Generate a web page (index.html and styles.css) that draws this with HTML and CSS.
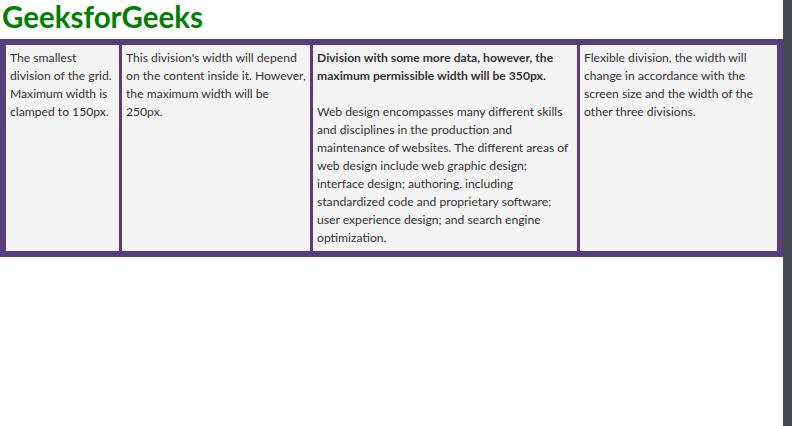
FILE: index.html
```html
<!DOCTYPE html>
<html>
<head>
<meta charset="utf-8">
<link rel="stylesheet" href="styles.css">
</head>
<body>
<div class="page">
  <h1 class="title">GeeksforGeeks</h1>
  <div class="grid">
    <div class="cell">The smallest division of the grid. Maximum width is clamped to 150px.</div>
    <div class="cell">This division's width will depend on the content inside it. However, the maximum width will be 250px.</div>
    <div class="cell">
      <p class="lead">Division with some more data, however, the maximum permissible width will be 350px.</p>
      <p class="body">Web design encompasses many different skills and disciplines in the production and maintenance of websites. The different areas of web design include web graphic design; interface design; authoring, including standardized code and proprietary software; user experience design; and search engine optimization.</p>
    </div>
    <div class="cell">Flexible division, the width will change in accordance with the screen size and the width of the other three divisions.</div>
  </div>
</div>
<div class="scrollbar"></div>
</body>
</html>
```

FILE: styles.css
```css
body {
  margin: 0;
  display: flex;
  min-height: 100vh;
  font-family: "Segoe UI", Lato, "Open Sans", sans-serif;
  background: #ffffff;
}
.page {
  flex: 1;
  min-width: 0;
}
.scrollbar {
  width: 9px;
  flex: none;
  background: #474955;
}
.title {
  margin: 0;
  height: 39px;
  padding-left: 2px;
  font-size: 29.5px;
  line-height: 34px;
  font-weight: 700;
  color: #008000;
}
.grid {
  display: grid;
  grid-template-columns: 113px 188px 264px 1fr;
  gap: 3px;
  padding: 6px;
  background: #563d7c;
}
.cell {
  background: #f4f4f4;
  padding: 4px;
  font-size: 12.15px;
  line-height: 18px;
  color: #333333;
}
.lead {
  margin: 0 0 18px;
  font-weight: 700;
}
.body {
  margin: 0;
}
```
